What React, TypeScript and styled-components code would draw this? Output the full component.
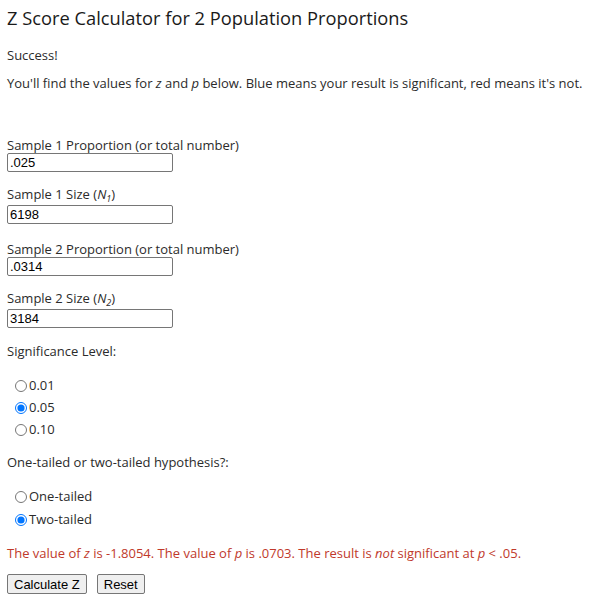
import React, { useState } from 'react'
import styled, { createGlobalStyle } from 'styled-components'

const GlobalStyle = createGlobalStyle`
    body {
        margin: 0;
        background: #ffffff;
        font-family: "Open Sans", "Liberation Sans", sans-serif;
        color: #333333;
    }
`

const Page = styled.div`
    padding: 6px 7px 0 7px;
    font-size: 13px;
    color: #2b2b2b;
`

const Title = styled.h1`
    margin: 0 0 17px 0;
    font-size: 18.3px;
    font-weight: 500;
    line-height: 24px;
    color: #1a1a1a;
`

const Para = styled.p`
    margin: 0 0 12px 0;
    line-height: 16px;
`

const Em = styled.i`
    font-style: italic;
    font-synthesis: style;
`

const Form = styled.form`
    margin-top: 46px;
`

const Fields = styled.div`
    display: flex;
    flex-direction: column;
    gap: 17px;
    margin-bottom: 15px;
`

const Label = styled.label<{ $sub?: boolean }>`
    display: block;
    line-height: 16px;
    margin-top: ${p => (p.$sub ? -3 : 0)}px;
    padding-bottom: ${p => (p.$sub ? 3 : 0)}px;

    sub {
        font-size: 9px;
        font-style: italic;
        vertical-align: -3px;
        line-height: 0;
    }
`

const TextInput = styled.input`
    display: block;
    width: 166px;
    height: 19px;
    box-sizing: border-box;
    margin: 0;
    padding: 1px 2px;
    border: 1px solid #767676;
    border-radius: 2px;
    font-family: "Liberation Sans", Arial, sans-serif;
    font-size: 13px;
    color: #000;
`

const Heading = styled.div<{ $gap: number }>`
    line-height: 16px;
    margin-bottom: ${p => p.$gap}px;
`

const RadioList = styled.div<{ $gap: number; $after: number }>`
    display: flex;
    flex-direction: column;
    gap: ${p => p.$gap}px;
    padding-left: 7px;
    margin-bottom: ${p => p.$after}px;
`

const RadioRow = styled.label`
    display: flex;
    align-items: center;
    line-height: 17px;

    input {
        margin: 0 2px 0 1px;
        width: 12px;
        height: 12px;
    }
`

const Result = styled.p<{ $significant: boolean }>`
    margin: 0 0 13px 0;
    line-height: 16px;
    color: ${p => (p.$significant ? '#1e5bb8' : '#c0392b')};
`

const Buttons = styled.div`
    display: flex;
    gap: 10px;
`

const Button = styled.button`
    height: 20px;
    padding: 1px 6px;
    font-family: "Liberation Sans", Arial, sans-serif;
    font-size: 13px;
    color: #000;
    background: #efefef;
    border: 1px solid #767676;
    border-radius: 2px;
`

export default function App() {
    const [alpha, setAlpha] = useState('0.05')
    const [tails, setTails] = useState('two')

    return (
        <Page>
            <GlobalStyle />
            <Title>Z Score Calculator for 2 Population Proportions</Title>
            <Para>Success!</Para>
            <Para>
                You'll find the values for <Em>z</Em> and <Em>p</Em> below. Blue means your result is significant, red means it's not.
            </Para>
            <Form onSubmit={e => e.preventDefault()}>
                <Fields>
                    <div>
                        <Label>Sample 1 Proportion (or total number)</Label>
                        <TextInput defaultValue=".025" />
                    </div>
                    <div>
                        <Label $sub>Sample 1 Size (<Em>N</Em><sub>1</sub>)</Label>
                        <TextInput defaultValue="6198" />
                    </div>
                    <div>
                        <Label>Sample 2 Proportion (or total number)</Label>
                        <TextInput defaultValue=".0314" />
                    </div>
                    <div>
                        <Label $sub>Sample 2 Size (<Em>N</Em><sub>2</sub>)</Label>
                        <TextInput defaultValue="3184" />
                    </div>
                </Fields>

                <Heading $gap={18}>Significance Level:</Heading>
                <RadioList $gap={5} $after={16}>
                    {['0.01', '0.05', '0.10'].map(v => (
                        <RadioRow key={v}>
                            <input type="radio" name="alpha" checked={alpha === v} onChange={() => setAlpha(v)} />
                            {v}
                        </RadioRow>
                    ))}
                </RadioList>

                <Heading $gap={18}>One-tailed or two-tailed hypothesis?:</Heading>
                <RadioList $gap={6} $after={17}>
                    <RadioRow>
                        <input type="radio" name="tails" checked={tails === 'one'} onChange={() => setTails('one')} />
                        One-tailed
                    </RadioRow>
                    <RadioRow>
                        <input type="radio" name="tails" checked={tails === 'two'} onChange={() => setTails('two')} />
                        Two-tailed
                    </RadioRow>
                </RadioList>

                <Result $significant={false}>
                    The value of <Em>z</Em> is -1.8054. The value of <Em>p</Em> is .0703. The result is <Em>not</Em> significant at <Em>p</Em> &lt; .05.
                </Result>
                <Buttons>
                    <Button type="button">Calculate Z</Button>
                    <Button type="reset">Reset</Button>
                </Buttons>
            </Form>
        </Page>
    )
}
